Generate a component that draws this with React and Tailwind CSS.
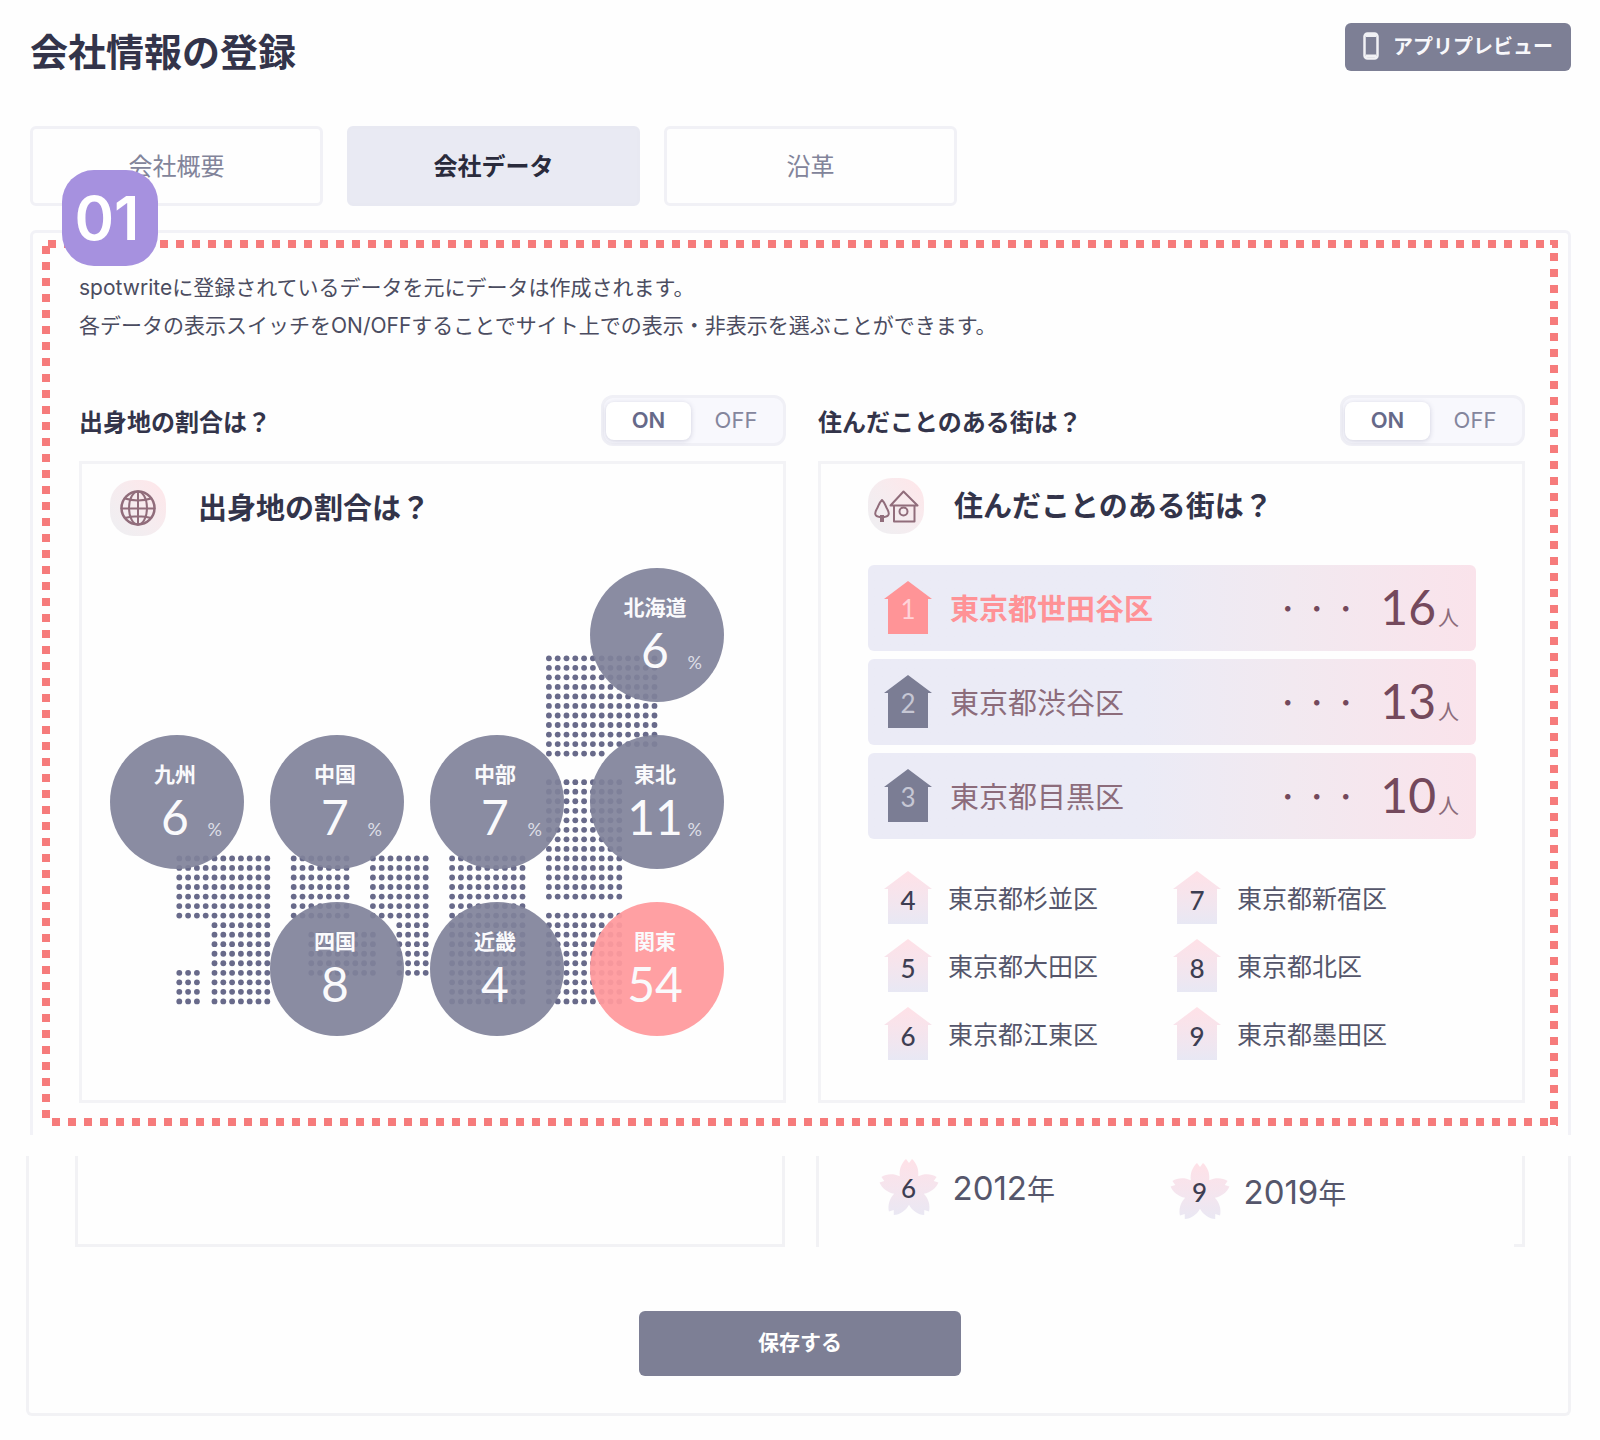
import React, { useState } from "react";

const regions = [
  { name: "北海道", value: 6, unit: true, place: "col-start-4 row-start-1" },
  { name: "九州", value: 6, unit: true, place: "col-start-1 row-start-2" },
  { name: "中国", value: 7, unit: true, place: "col-start-2 row-start-2" },
  { name: "中部", value: 7, unit: true, place: "col-start-3 row-start-2" },
  { name: "東北", value: 11, unit: true, place: "col-start-4 row-start-2" },
  { name: "四国", value: 8, place: "col-start-2 row-start-3" },
  { name: "近畿", value: 4, place: "col-start-3 row-start-3" },
  { name: "関東", value: 54, place: "col-start-4 row-start-3", accent: true },
];

// Blocks of the dotted map: [first column, last column, first row, last row]
const dotBlocks = [
  [42, 54, 0, 9],
  [42, 48, 10, 10],
  [42, 50, 13, 25],
  [42, 50, 27, 36],
  [31, 39, 21, 36],
  [22, 28, 21, 27],
  [25, 28, 28, 33],
  [15, 22, 29, 33],
  [13, 19, 21, 27],
  [0, 10, 21, 27],
  [4, 10, 28, 36],
  [0, 2, 33, 36],
];

const topTowns = [
  { rank: 1, name: "東京都世田谷区", count: 16 },
  { rank: 2, name: "東京都渋谷区", count: 13 },
  { rank: 3, name: "東京都目黒区", count: 10 },
];

const otherTowns = [
  { rank: 4, name: "東京都杉並区" },
  { rank: 5, name: "東京都大田区" },
  { rank: 6, name: "東京都江東区" },
  { rank: 7, name: "東京都新宿区" },
  { rank: 8, name: "東京都北区" },
  { rank: 9, name: "東京都墨田区" },
];

function DotMap() {
  const dots = [];
  dotBlocks.forEach(([c0, c1, r0, r1]) => {
    for (let c = c0; c <= c1; c++) {
      for (let r = r0; r <= r1; r++) {
        dots.push(<circle key={`${c}-${r}`} cx={69.3 + c * 8.8} cy={90.3 + r * 9.53} r="2.9" />);
      }
    }
  });
  return (
    <svg aria-hidden="true" className="absolute top-0 left-0" width="614" height="468" viewBox="0 0 614 468" fill="#686a8a">
      {dots}
    </svg>
  );
}

function RegionCircle({ region }) {
  return (
    <li
      className={`relative flex size-[134px] flex-col items-center rounded-full pt-[22px] pr-1 text-[#fafafc] ${
        region.accent ? "bg-[#ff9a9d]/94" : "bg-[#80829a]/92"
      } ${region.place}`}
    >
      <span className="text-[21px] leading-8 font-bold">{region.name}</span>
      <span className="pt-[2px] font-[Lato,sans-serif] text-5xl leading-[52px]">{region.value}</span>
      {region.unit && (
        <span className="absolute top-[84px] right-[22px] font-[Lato,sans-serif] text-lg leading-5 text-[#dddee6]">%</span>
      )}
    </li>
  );
}

function House({ rank, fill, className }) {
  return (
    <span className="grid shrink-0 place-items-center">
      <svg aria-hidden="true" className="col-start-1 row-start-1" width="48" height="53" viewBox="0 0 48 53">
        <defs>
          <linearGradient id="houseTint" x1="0" y1="0" x2="0" y2="1">
            <stop offset="0" stopColor="#ffe1e7" />
            <stop offset="0.4" stopColor="#f7e4ec" />
            <stop offset="1" stopColor="#e8e8f4" />
          </linearGradient>
        </defs>
        <path d="M24 0 48 18H44V53H4V18H0Z" fill={fill || "url(#houseTint)"} />
      </svg>
      <span className={`col-start-1 row-start-1 pt-1 font-[Lato,sans-serif] text-[26px] leading-8 ${className}`}>{rank}</span>
    </span>
  );
}

function Blossom({ rank }) {
  const petal = "M30 34C17 23 19 8 27 1L30 5L33 1C41 8 43 23 30 34Z";
  const id = `petals${rank}`;
  return (
    <span className="grid shrink-0 place-items-center">
      <svg aria-hidden="true" className="col-start-1 row-start-1" width="60" height="60" viewBox="0 0 60 60">
        <defs>
          <linearGradient id="petalTint" x1="0" y1="0" x2="0" y2="1">
            <stop offset="0" stopColor="#ffe1e7" />
            <stop offset="0.5" stopColor="#f5e5ee" />
            <stop offset="1" stopColor="#e8e8f4" />
          </linearGradient>
          <clipPath id={id}>
            {[0, 72, 144, 216, 288].map((a) => (
              <path key={a} d={petal} transform={`rotate(${a} 30 31)`} />
            ))}
            <circle cx="30" cy="31" r="14" />
          </clipPath>
        </defs>
        <rect width="60" height="60" fill="url(#petalTint)" clipPath={`url(#${id})`} />
      </svg>
      <span className="col-start-1 row-start-1 font-[Lato,sans-serif] text-[26px] leading-8 font-medium text-[#3d3e52]">{rank}</span>
    </span>
  );
}

function Year({ value }) {
  return (
    <span className="flex items-baseline text-[#55566b]">
      <span className="font-[Inter,sans-serif] text-[33px] leading-10">{value}</span>
      <span className="text-[28px] leading-10">年</span>
    </span>
  );
}

function Toggle({ label }) {
  const [on, setOn] = useState(true);
  const active = "rounded-lg bg-white font-semibold text-[#666989] shadow-[0_1px_5px_rgba(90,90,130,0.25)]";
  const idle = "text-[#84869d]";
  return (
    <div
      role="group"
      aria-label={label}
      className="flex h-[51px] w-[185px] items-center rounded-xl border-[3px] border-[#f0f0f6] bg-[#f8f8fd] px-[2px] font-[Inter,sans-serif] text-[22px]"
    >
      <button type="button" aria-pressed={on} onClick={() => setOn(true)} className={`h-[38px] w-[85px] ${on ? active : idle}`}>
        ON
      </button>
      <button type="button" aria-pressed={!on} onClick={() => setOn(false)} className={`h-[38px] flex-1 ${on ? idle : active}`}>
        OFF
      </button>
    </div>
  );
}

function Badge({ children }) {
  return (
    <svg
      aria-hidden="true"
      width="56"
      height="56"
      viewBox="0 0 56 56"
      fill="none"
      stroke="#916d7b"
      strokeWidth="2"
      strokeLinejoin="round"
      strokeLinecap="round"
      className="shrink-0 rounded-3xl bg-linear-to-bl from-[#ffe6e9] via-[#f6ecef] to-[#eeeff2]"
    >
      {children}
    </svg>
  );
}

function DataColumn({ title, children }) {
  return (
    <section className="flex flex-col">
      <div className="mb-[15px] flex items-center justify-between">
        <h2 className="text-2xl leading-8 font-bold text-[#33344a]">{title}</h2>
        <Toggle label={title} />
      </div>
      <div className="flex-1 border-[3px] border-[#f3f3f6]">{children}</div>
    </section>
  );
}

function DashedFrame() {
  const line = { stroke: "#f67b7b", strokeWidth: 8, strokeDasharray: "8 8" };
  return (
    <div aria-hidden="true" className="pointer-events-none absolute top-[10px] right-[13px] bottom-[9px] left-3">
      <svg className="absolute top-0 left-0 h-2 w-full">
        <line x1="6" y1="4" x2="100%" y2="4" {...line} />
      </svg>
      <svg className="absolute bottom-0 left-0 h-2 w-full">
        <line x1="10" y1="4" x2="100%" y2="4" {...line} />
      </svg>
      <svg className="absolute top-0 left-0 h-full w-2">
        <line x1="4" y1="6" x2="4" y2="100%" {...line} />
      </svg>
      <svg className="absolute top-0 right-0 h-full w-2">
        <line x1="4" y1="-3" x2="4" y2="100%" {...line} />
      </svg>
    </div>
  );
}

export default function App() {
  const [tab, setTab] = useState("会社データ");
  return (
    <main className="min-h-screen bg-[#fefefe] pt-[23px] pr-[29px] pb-6 pl-[30px] font-['Noto_Sans_CJK_JP',sans-serif] text-[#33344a]">
      <header className="flex items-start justify-between">
        <h1 className="text-[38px] leading-[54px] font-bold text-[#33344a]">会社情報の登録</h1>
        <button type="button" className="flex h-12 items-center gap-[14px] rounded-md bg-[#7d7f95] pr-[18px] pb-[3px] pl-[18px] text-xl font-bold text-[#f8f8fb]">
          <svg aria-hidden="true" width="16" height="28" viewBox="0 0 16 28" fill="none">
            <rect x="1.5" y="1.5" width="13" height="25" rx="3" stroke="#f1f1f5" strokeWidth="2.5" />
            <path d="M3 3.5H13M3 24H13" stroke="#f1f1f5" strokeWidth="3" />
          </svg>
          アプリプレビュー
        </button>
      </header>

      <nav className="mt-[49px] flex gap-6">
        {["会社概要", "会社データ", "沿革"].map((name) => (
          <button
            key={name}
            type="button"
            aria-current={tab === name ? "page" : undefined}
            onClick={() => setTab(name)}
            className={`h-20 w-[293px] rounded-md border-[3px] pb-[2px] text-2xl ${
              tab === name ? "border-[#e8e9f2] bg-[#e9eaf3] font-bold text-[#2a2b3c]" : "border-[#f1f1f6] text-[#82849a]"
            }`}
          >
            {name}
          </button>
        ))}
      </nav>

      <div className="relative mt-6">
        <div className="rounded-t-md border-x-[3px] border-t-[3px] border-[#f2f2f7] pt-9 pr-[43px] pb-8 pl-[46px]">
          <p className="font-[Inter,'Noto_Sans_CJK_JP',sans-serif] text-[21px] leading-[38px] text-[#4b4c60]">
            spotwriteに登録されているデータを元にデータは作成されます。
            <br />
            各データの表示スイッチをON/OFFすることでサイト上での表示・非表示を選ぶことができます。
          </p>

          <div className="mt-[50px] grid grid-cols-2 gap-8">
            <DataColumn title="出身地の割合は？">
              <div className="flex items-center gap-8 px-7 pt-4">
                <Badge>
                  <circle cx="28" cy="28" r="16.5" strokeWidth="2.5" />
                  <ellipse cx="28" cy="28" rx="9" ry="16.5" />
                  <path d="M28 11.5V44.5M11.5 28.5H44.5M15 18.5C22 21 34 21 41 18.5M15 38C22 35.5 34 35.5 41 38" />
                </Badge>
                <h3 className="pb-1 text-[29px] leading-[52px] font-bold">出身地の割合は？</h3>
              </div>
              <div className="relative mx-7 mt-8 mb-16">
                <DotMap />
                <ul className="relative grid w-fit grid-cols-4 grid-rows-3 gap-x-[26px] gap-y-[33px]">
                  {regions.map((r) => (
                    <RegionCircle key={r.name} region={r} />
                  ))}
                </ul>
              </div>
            </DataColumn>

            <DataColumn title="住んだことのある街は？">
              <div className="pr-[46px] pb-[38px] pl-[47px]">
                <div className="flex items-center gap-[30px] pt-[14px]">
                  <Badge>
                    <path d="M22.5 27.500 35.500 13.500 49.500 27.500ZM26 27.500V43.500H46.500V27.500" />
                    <circle cx="35.500" cy="33.500" r="4" />
                    <path d="M14 22C10 26 11 28 8.500 31.500C5.500 37 8 39 14 39C20 39 22.500 37 19.500 31.500C17 28 18 26 14 22Z" />
                    <path d="M14 37V44" strokeWidth="4" strokeLinecap="butt" />
                  </Badge>
                  <h3 className="pb-1 text-[29px] leading-[52px] font-bold">住んだことのある街は？</h3>
                </div>

                <ol className="mt-[31px] flex flex-col gap-2">
                  {topTowns.map((t) => (
                    <li
                      key={t.rank}
                      className="flex h-[86px] items-center rounded-md bg-linear-to-r from-[#ebebf6] from-45% via-[#f2e9f0] via-70% to-[#fae3eb] pr-[17px] pb-[2px] pl-4"
                    >
                      <House rank={t.rank} fill={t.rank === 1 ? "#ff9497" : "#7b7d94"} className={t.rank === 1 ? "text-[#ffd3d9]" : "text-[#c6c7d4]"} />
                      <span className={`ml-[18px] flex-1 text-[29px] leading-10 ${t.rank === 1 ? "font-bold text-[#ff9296]" : "text-[#8c6c7b]"}`}>
                        {t.name}
                      </span>
                      <span className="mr-5 text-[29px] leading-10 font-light text-[#74495c]">・・・</span>
                      <span className="flex items-baseline gap-[2px] text-[#74495c]">
                        <span className="font-[Lato,sans-serif] text-5xl leading-[52px]">{t.count}</span>
                        <span className="text-[21px] leading-8 text-[#8c6c7b]">人</span>
                      </span>
                    </li>
                  ))}
                </ol>

                <ol className="mt-8 grid w-fit grid-flow-col grid-rows-3 gap-x-[75px] gap-y-[15px] pl-4">
                  {otherTowns.map((t) => (
                    <li key={t.rank} className="flex items-center gap-4">
                      <House rank={t.rank} className="font-medium text-[#3d3e52]" />
                      <span className="pb-[2px] text-[25px] leading-8 text-[#55566b]">{t.name}</span>
                    </li>
                  ))}
                </ol>
              </div>
            </DataColumn>
          </div>
        </div>

        <DashedFrame />
        <span className="absolute -top-[60px] left-8 flex size-24 items-center justify-center rounded-[32px] bg-[#a691df] pr-[6px] font-[Inter,sans-serif] text-6xl font-semibold text-white">
          01
        </span>
      </div>

      <section className="mt-[21px] -ml-1 rounded-b-md border-x-[3px] border-b-[3px] border-[#f2f2f5] pr-[43px] pb-[37px] pl-[46px]">
        <div className="grid grid-cols-2 gap-[31px]">
          <div className="h-[91px] border-x-[3px] border-b-[3px] border-[#f2f2f5]" />
          <div className="relative flex h-[91px] items-start border-x-[3px] border-[#f2f2f5] pl-[60px]">
            <div className="flex w-[291px] items-center gap-[14px] pt-[2px]">
              <Blossom rank={6} />
              <Year value="2012" />
            </div>
            <div className="flex items-center gap-[14px] pt-[6px]">
              <Blossom rank={9} />
              <Year value="2019" />
            </div>
            <span aria-hidden="true" className="absolute right-0 bottom-0 h-[3px] w-2 bg-[#f2f2f5]" />
          </div>
        </div>
        <div className="mt-16 flex justify-center">
          <button type="button" className="h-[65px] w-[322px] rounded-md bg-[#7d7f95] pb-1 text-[21px] font-bold text-white">
            保存する
          </button>
        </div>
      </section>
    </main>
  );
}
